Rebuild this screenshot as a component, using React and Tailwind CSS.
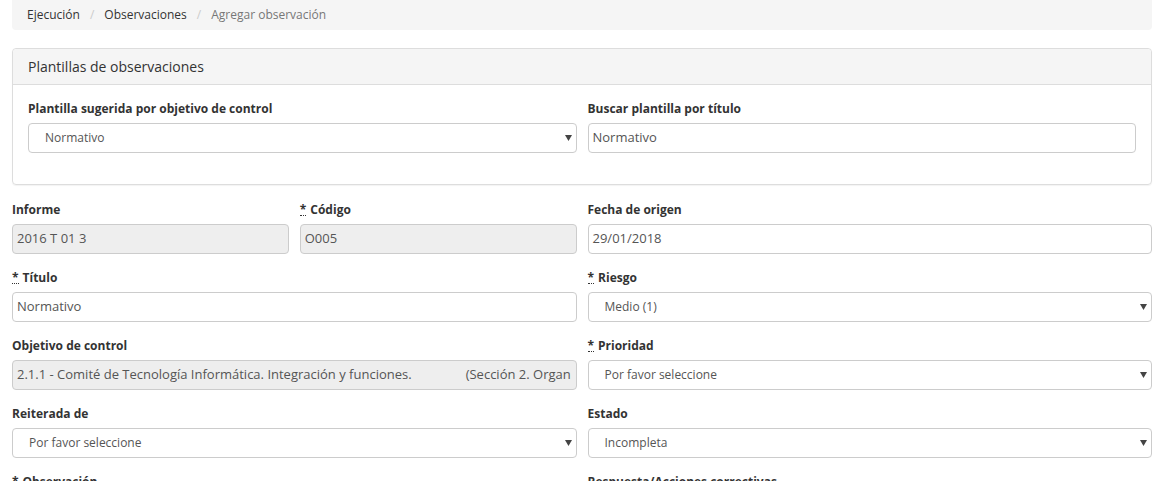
import React from "react";

const font = { fontFamily: '"Open Sans", "Liberation Sans", sans-serif' };

function Req() {
  return (
    <abbr className="no-underline border-b border-dotted border-[#333] leading-[10px] inline-block mr-1" title="requerido">
      *
    </abbr>
  );
}

function Label({ children, req }) {
  return (
    <label className="block text-[12px] font-bold text-[#333] leading-[18px] mb-[5px]">
      {req && <Req />}
      {children}
    </label>
  );
}

function Input({ value, disabled }) {
  return (
    <div
      className={
        "h-[30px] border border-[#ccc] rounded-[4px] px-[4px] flex items-center text-[13px] text-[#555] whitespace-pre overflow-hidden " +
        (disabled ? "bg-[#eee]" : "bg-white")
      }
    >
      {value}
    </div>
  );
}

function Select({ value }) {
  return (
    <div className="h-[30px] border border-[#ccc] rounded-[4px] pl-[16px] pr-[4px] flex items-center justify-between text-[12px] text-[#555] bg-white">
      <span>{value}</span>
      <svg width="7" height="6" viewBox="0 0 7 6">
        <path d="M0 0 L7 0 L3.5 6 Z" fill="#444" />
      </svg>
    </div>
  );
}

function Field({ label, req, children }) {
  return (
    <div className="mb-[15px]">
      <Label req={req}>{label}</Label>
      {children}
    </div>
  );
}

export default function App() {
  return (
    <div className="min-h-screen bg-white pl-[12px] pr-[8px]" style={font}>
      {/* breadcrumb */}
      <div className="bg-[#f5f5f5] h-[30px] rounded-b-[4px] flex items-center px-[15px] text-[12px] mb-[18px]">
        <span className="text-[#333]">Ejecución</span>
        <span className="text-[#ccc] px-[10px]">/</span>
        <span className="text-[#333]">Observaciones</span>
        <span className="text-[#ccc] px-[10px]">/</span>
        <span className="text-[#777]">Agregar observación</span>
      </div>

      {/* panel */}
      <div className="border border-[#ddd] rounded-[4px] mb-[16px] shadow-[0_1px_1px_rgba(0,0,0,0.05)]">
        <div className="bg-[#f5f5f5] border-b border-[#ddd] h-[36px] px-[15px] flex items-center text-[14px] text-[#333] rounded-t-[4px]">
          Plantillas de observaciones
        </div>
        <div className="px-[15px] pt-[15px] pb-[16px]">
          <div className="grid grid-cols-2 gap-x-[11px]">
            <Field label="Plantilla sugerida por objetivo de control">
              <Select value="Normativo" />
            </Field>
            <Field label="Buscar plantilla por título">
              <Input value="Normativo" />
            </Field>
          </div>
        </div>
      </div>

      {/* form */}
      <div className="grid grid-cols-2 gap-x-[11px]">
        <div className="grid grid-cols-2 gap-x-[11px]">
          <Field label="Informe">
            <Input value="2016 T 01 3" disabled />
          </Field>
          <Field label="Código" req>
            <Input value="O005" disabled />
          </Field>
        </div>
        <Field label="Fecha de origen">
          <Input value="29/01/2018" />
        </Field>

        <Field label="Título" req>
          <Input value="Normativo" />
        </Field>
        <Field label="Riesgo" req>
          <Select value="Medio (1)" />
        </Field>

        <Field label="Objetivo de control">
          <Input
            value="2.1.1 - Comité de Tecnología Informática. Integración y funciones.                (Sección 2. Organ"
            disabled
          />
        </Field>
        <Field label="Prioridad" req>
          <Select value="Por favor seleccione" />
        </Field>

        <Field label="Reiterada de">
          <Select value="Por favor seleccione" />
        </Field>
        <Field label="Estado">
          <Select value="Incompleta" />
        </Field>

        <div className="mb-[15px]">
          <Label req>Observación</Label>
          <div className="h-[100px] border border-[#ccc] rounded-[4px]" />
        </div>
        <div className="mb-[15px]">
          <Label>Respuesta/Acciones correctivas</Label>
          <div className="h-[100px] border border-[#ccc] rounded-[4px]" />
        </div>
      </div>
    </div>
  );
}
